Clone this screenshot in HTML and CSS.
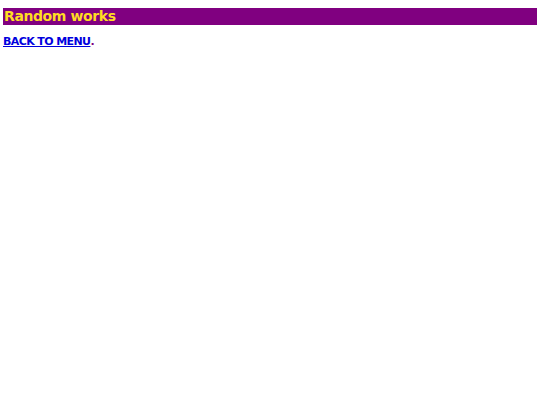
FILE: index.html
```html
<!DOCTYPE html>
<html lang="en">
<head>
    <meta charset="UTF-8">
    <title>Random works</title>
    <link rel="stylesheet" href="styles.css">
</head>
<body>

    <h1 class="title">Random works</h1>

    <p class="nav"><a href="#">BACK TO MENU</a>.</p>

</body>
</html>
```

FILE: styles.css
```css
body {
    font-family: "DejaVu Sans", Verdana, sans-serif;
    background: white;
    color: purple;
    margin: 3px;
}

.title {
    background: purple;
    color: #ffdd22;
    font-size: 14px;
    letter-spacing: -0.4px;
    line-height: 17px;
    margin: 5px 0 0 0;
    padding: 0 1px;
}

.nav {
    font-size: 11px;
    letter-spacing: -0.6px;
    font-weight: bold;
    margin: 10px 0 0 0;
}

.nav a {
    color: #0000dd;
}
```
